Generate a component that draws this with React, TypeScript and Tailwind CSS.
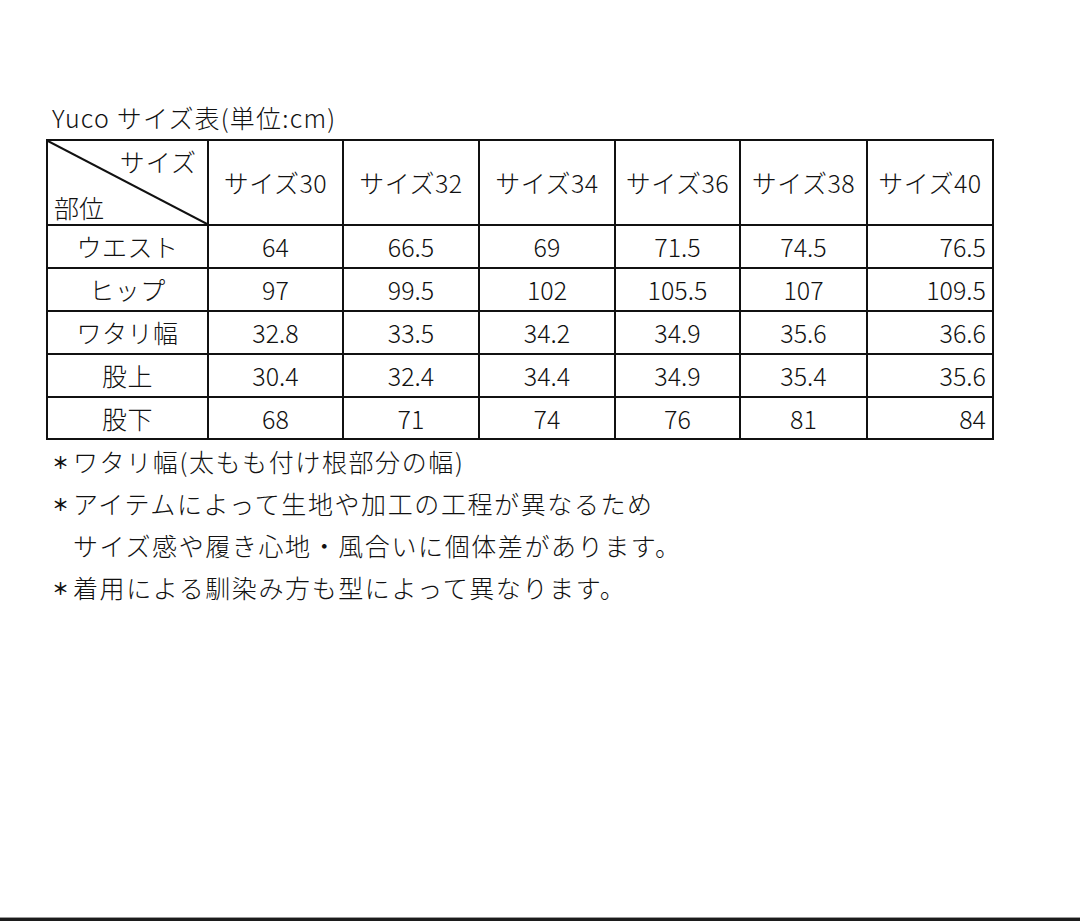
const sizes = ["サイズ30", "サイズ32", "サイズ34", "サイズ36", "サイズ38", "サイズ40"];

const rows: { label: string; values: string[] }[] = [
  { label: "ウエスト", values: ["64", "66.5", "69", "71.5", "74.5", "76.5"] },
  { label: "ヒップ", values: ["97", "99.5", "102", "105.5", "107", "109.5"] },
  { label: "ワタリ幅", values: ["32.8", "33.5", "34.2", "34.9", "35.6", "36.6"] },
  { label: "股上", values: ["30.4", "32.4", "34.4", "34.9", "35.4", "35.6"] },
  { label: "股下", values: ["68", "71", "74", "76", "81", "84"] },
];

const widths = ["w-[161px]", "w-[135px]", "w-[136px]", "w-[136px]", "w-[125px]", "w-[127px]", "w-[126px]"];

function Note({ star = true, children }: { star?: boolean; children: React.ReactNode }) {
  return (
    <div className="flex h-[42px] items-center">
      <span className="inline-flex w-[25px] shrink-0 justify-center text-[17px] font-bold">{star ? "＊" : ""}</span>
      <span className="tracking-[1.6px]">{children}</span>
    </div>
  );
}

export default function App() {
  return (
    <div
      className="flex h-[921px] w-[1080px] flex-col bg-white font-light text-[#111]"
      style={{ fontFamily: '"Noto Sans CJK JP", "Noto Sans", sans-serif' }}
    >
      <div className="flex-1 pl-[46px] pt-[99px]">
        <div className="h-[36px] pl-[6px] text-[25px] leading-[36px] tracking-[1.2px]">Yuco サイズ表(単位:cm)</div>
        <table className="mt-[4px] w-[946px] table-fixed border-collapse text-[25px] leading-none">
          <colgroup>
            {widths.map((w, i) => (
              <col key={i} className={w} />
            ))}
          </colgroup>
          <thead>
            <tr className="h-[85px]">
              <th className="relative border-2 border-[#111] p-0 font-light">
                <svg className="absolute inset-0 h-full w-full" preserveAspectRatio="none" viewBox="0 0 100 100">
                  <line x1="0" y1="0" x2="100" y2="100" stroke="#111" strokeWidth="2" vectorEffect="non-scaling-stroke" />
                </svg>
                <div className="flex h-[83px] flex-col justify-between px-[6px] pb-[4px] pt-[8px]">
                  <span className="self-end pr-[4px] tracking-[1px]">サイズ</span>
                  <span className="self-start">部位</span>
                </div>
              </th>
              {sizes.map((s) => (
                <th key={s} className="border-2 border-[#111] p-0 text-center font-light tracking-[0.5px]">
                  {s}
                </th>
              ))}
            </tr>
          </thead>
          <tbody>
            {rows.map((r, ri) => (
              <tr key={r.label} className={ri === rows.length - 1 ? "h-[42px]" : "h-[43px]"}>
                <td className="border-2 border-[#111] p-0 text-center tracking-[0.5px]">{r.label}</td>
                {r.values.map((v, i) => (
                  <td
                    key={i}
                    className={
                      i === r.values.length - 1
                        ? "border-2 border-[#111] p-0 pr-[6px] text-right"
                        : "border-2 border-[#111] p-0 text-center"
                    }
                  >
                    {v}
                  </td>
                ))}
              </tr>
            ))}
          </tbody>
        </table>
        <div className="mt-[1px] pl-[2px] text-[25px]">
          <Note>ワタリ幅(太もも付け根部分の幅)</Note>
          <Note>アイテムによって生地や加工の工程が異なるため</Note>
          <Note star={false}>サイズ感や履き心地・風合いに個体差があります。</Note>
          <Note>着用による馴染み方も型によって異なります。</Note>
        </div>
      </div>
      <div className="h-px bg-[#9a9a9a]" />
      <div className="h-[3px] bg-[#1c1c1c]" />
    </div>
  );
}
